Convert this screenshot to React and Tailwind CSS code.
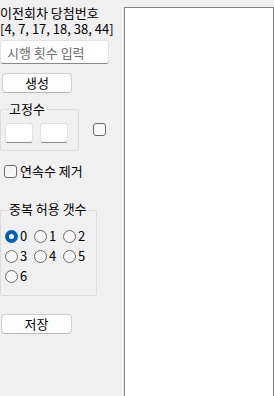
import React, { useState } from "react";

const FONT = "font-['Noto_Sans_CJK_KR','Noto_Sans',sans-serif]";

function Radio({ label, checked, onClick }) {
  return (
    <button onClick={onClick} className="flex items-center gap-[2px] w-[29px] h-[20px]">
      {checked ? (
        <span className="w-[13px] h-[13px] rounded-full bg-[#005fb8] flex items-center justify-center">
          <span className="w-[5px] h-[5px] rounded-full bg-white" />
        </span>
      ) : (
        <span className="w-[13px] h-[13px] rounded-full border border-[#6b6b6b] bg-[#f7f7f7]" />
      )}
      <span className="text-[13px] leading-[14px] text-black">{label}</span>
    </button>
  );
}

function Checkbox({ checked, onClick }) {
  return (
    <span
      onClick={onClick}
      className={`block w-[13px] h-[13px] rounded-[3px] border ${
        checked ? "bg-[#005fb8] border-[#005fb8]" : "border-[#6b6b6b] bg-[#f7f7f7]"
      }`}
    />
  );
}

export default function App() {
  const [dup, setDup] = useState(0);
  const [fixedChk, setFixedChk] = useState(false);
  const [noSeq, setNoSeq] = useState(false);

  return (
    <div className={`w-[274px] h-[396px] bg-[#f0f0f0] flex overflow-hidden text-black ${FONT}`}>
      {/* left panel */}
      <div className="w-[124px] shrink-0 flex flex-col">
        <div className="pt-[5px] text-[13px] leading-[16px] whitespace-nowrap">
          <div>이전회차 당첨번호</div>
          <div>[4, 7, 17, 18, 38, 44]</div>
        </div>

        <input
          placeholder="시행 횟수 입력"
          className="mt-[3px] w-[109px] h-[24px] bg-white border border-[#e3e3e3] border-b-[#8a8a8a] rounded-[3px] pl-[6px] text-[13px] placeholder:text-[#6e6e6e] outline-none"
        />

        <button className="mt-[9px] ml-[2px] w-[70px] h-[20px] bg-[#fdfdfd] border border-[#d0d0d0] border-b-[#b8b8b8] rounded-[4px] text-[13px] leading-[14px]">
          생성
        </button>

        {/* 고정수 group */}
        <div className="mt-[16px] flex items-start">
          <div className="relative w-[79px] h-[42px] border border-[#dcdcdc] rounded-[2px]">
            <span className="absolute left-[7px] top-[-8px] px-[1px] bg-[#f0f0f0] text-[13px] leading-[14px]">
              고정수
            </span>
            <div className="flex gap-[7px] pl-[4px] pt-[13px]">
              <input className="w-[28px] h-[20px] bg-white border border-[#e3e3e3] border-b-[#8a8a8a] rounded-[3px] outline-none" />
              <input className="w-[28px] h-[20px] bg-white border border-[#e3e3e3] border-b-[#8a8a8a] rounded-[3px] outline-none" />
            </div>
          </div>
          <div className="ml-[14px] mt-[14px]">
            <Checkbox checked={fixedChk} onClick={() => setFixedChk(!fixedChk)} />
          </div>
        </div>

        <div className="mt-[13px] ml-[4px] flex items-center gap-[3px]" onClick={() => setNoSeq(!noSeq)}>
          <Checkbox checked={noSeq} />
          <span className="text-[13px] leading-[14px]">연속수 제거</span>
        </div>

        {/* 중복 허용 갯수 group */}
        <div className="relative mt-[32px] w-[97px] h-[86px] border border-[#dcdcdc] rounded-[2px]">
          <span className="absolute left-[7px] top-[-9px] px-[1px] bg-[#f0f0f0] text-[13px] leading-[14px] whitespace-nowrap">
            중복 허용 갯수
          </span>
          <div className="pl-[4px] pt-[15px] flex flex-wrap w-[94px]">
            {[0, 1, 2, 3, 4, 5, 6].map((n) => (
              <Radio key={n} label={n} checked={dup === n} onClick={() => setDup(n)} />
            ))}
          </div>
        </div>

        <button className="mt-[18px] ml-[1px] w-[71px] h-[20px] bg-[#fdfdfd] border border-[#d0d0d0] border-b-[#b8b8b8] rounded-[4px] text-[13px] leading-[14px]">
          저장
        </button>
      </div>

      {/* result list */}
      <div className="mt-[7px] w-[150px] h-[400px] bg-white border border-[#828282]" />
    </div>
  );
}
